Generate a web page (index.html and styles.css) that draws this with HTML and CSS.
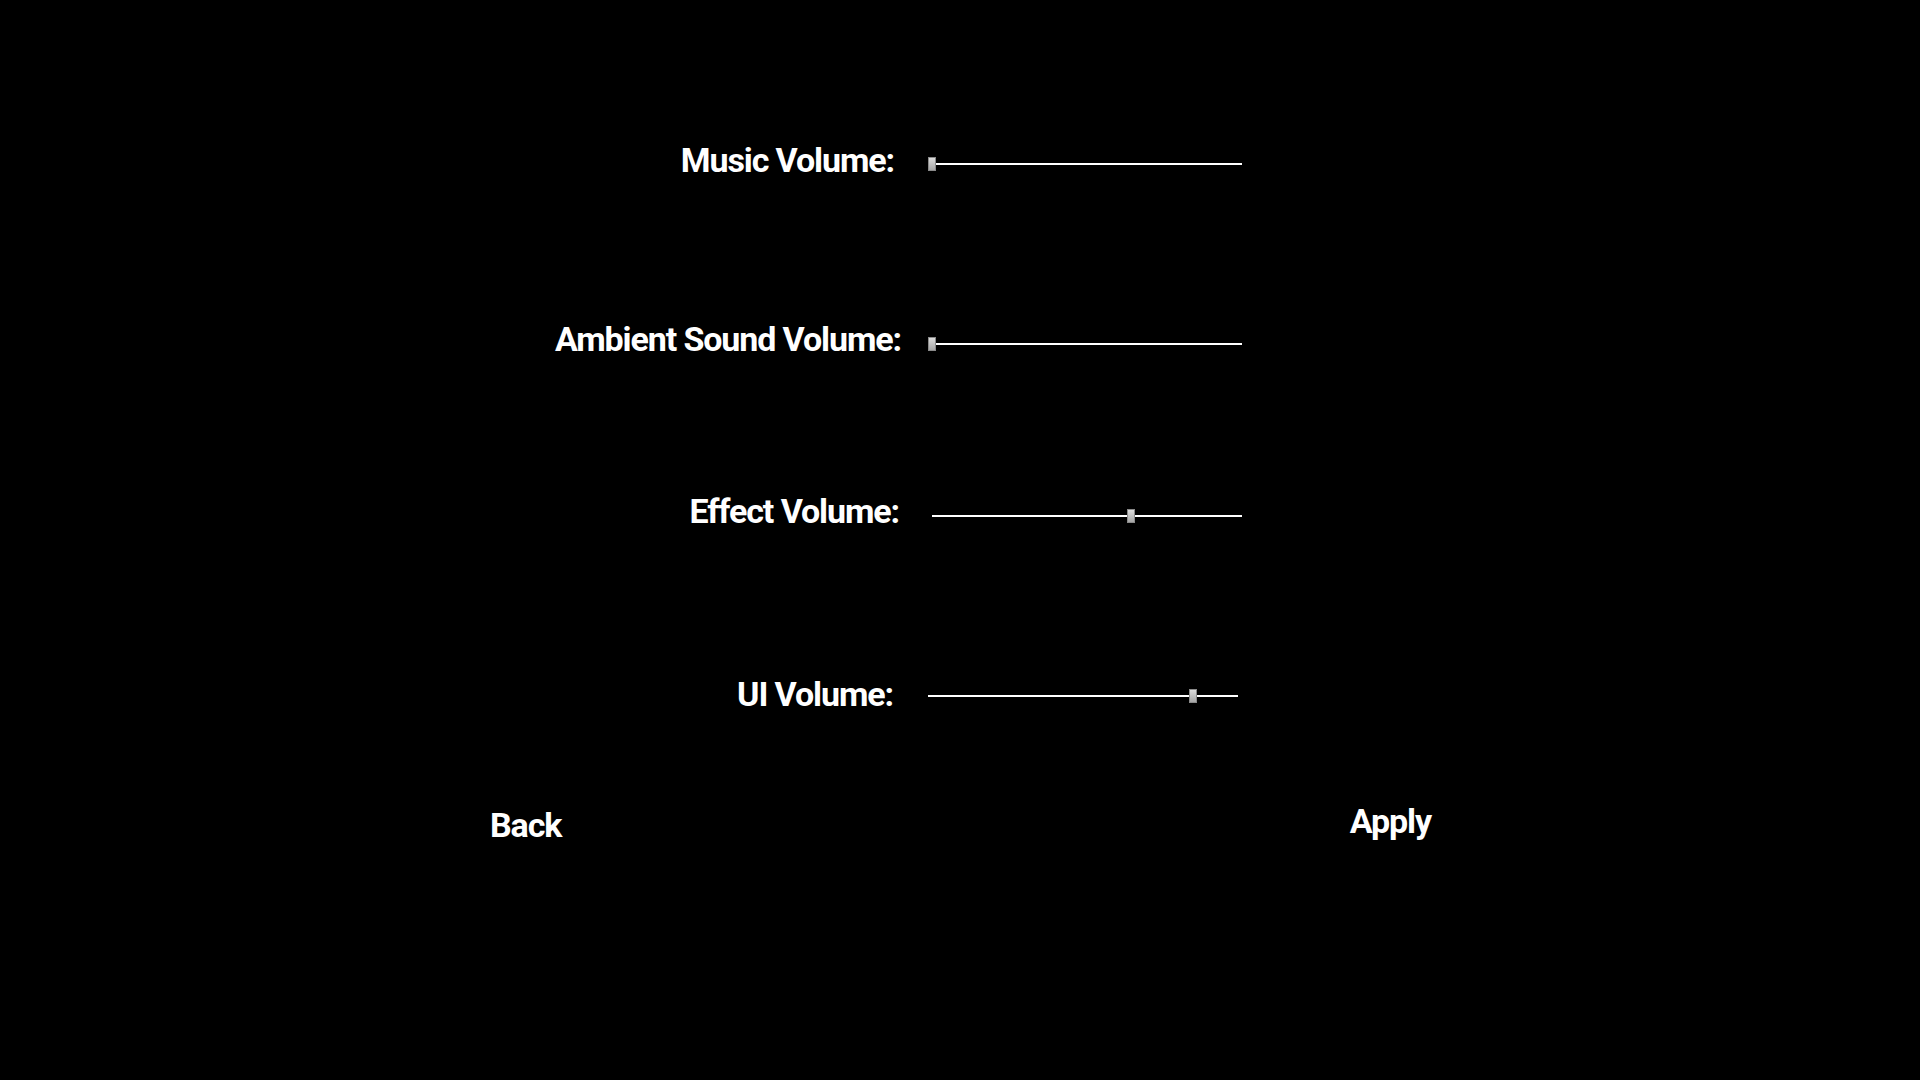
FILE: index.html
```html
<!DOCTYPE html>
<html>
<head>
<meta charset="utf-8">
<link rel="stylesheet" href="styles.css">
</head>
<body>
<main class="menu">
  <div class="row row-music">
    <span class="label">Music Volume:</span>
    <div class="slider"><div class="track"></div><div class="thumb" style="left:0px"></div></div>
  </div>
  <div class="row row-ambient">
    <span class="label">Ambient Sound Volume:</span>
    <div class="slider"><div class="track"></div><div class="thumb" style="left:0px"></div></div>
  </div>
  <div class="row row-effect">
    <span class="label">Effect Volume:</span>
    <div class="slider"><div class="track"></div><div class="thumb" style="left:195px"></div></div>
  </div>
  <div class="row row-ui">
    <span class="label">UI Volume:</span>
    <div class="slider"><div class="track"></div><div class="thumb" style="left:261px"></div></div>
  </div>
  <div class="actions">
    <span class="btn btn-back">Back</span>
    <span class="btn btn-apply">Apply</span>
  </div>
</main>
</body>
</html>
```
FILE: styles.css
```css
html, body {
  margin: 0;
  padding: 0;
  background: #000;
  width: 1920px;
  height: 1080px;
  overflow: hidden;
}
.menu {
  display: flex;
  flex-direction: column;
  padding-top: 140px;
  font-family: Roboto, "Liberation Sans", sans-serif;
  font-weight: 700;
  color: #fff;
}
.row {
  display: flex;
  align-items: center;
  height: 40px;
}
.label {
  width: 894px;
  text-align: right;
  font-size: 34px;
  letter-spacing: -1.1px;
  line-height: 40px;
  white-space: nowrap;
}
.slider {
  position: relative;
  width: 314px;
  height: 14px;
  margin-left: 34px;
}
.track {
  position: absolute;
  left: 0;
  right: 0;
  top: 6px;
  height: 2px;
  background: #fff;
}
.thumb {
  position: absolute;
  top: 0;
  width: 6px;
  height: 12px;
  border: 1px solid #8a8a8a;
  background: linear-gradient(#dcdcdc, #a6a6a6);
}
.row-music .slider { margin-top: 8px; }
.row-ambient { margin-top: 139px; }
.row-ambient .label { width: 901px; }
.row-ambient .slider { margin-left: 27px; margin-top: 10px; }
.row-effect { margin-top: 132px; }
.row-effect .label { width: 899px; }
.row-effect .slider { margin-left: 33px; width: 310px; margin-top: 10px; }
.row-ui { margin-top: 143px; }
.row-ui .label { width: 893px; }
.row-ui .slider { margin-left: 35px; width: 310px; margin-top: 4px; }
.actions {
  display: flex;
  justify-content: space-between;
  align-items: flex-start;
  width: 941px;
  margin-left: 490px;
  margin-top: 87px;
}
.btn {
  font-size: 34px;
  letter-spacing: -1.1px;
  line-height: 40px;
}
.btn-back { margin-top: 4px; }
```
